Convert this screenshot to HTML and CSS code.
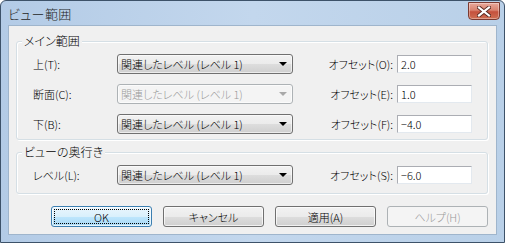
FILE: index.html
```html
<!DOCTYPE html>
<html lang="ja">
<head>
<meta charset="utf-8">
<title>ビュー範囲</title>
<link rel="stylesheet" href="styles.css">
</head>
<body>
<div class="window">
  <div class="titlebar">
    <span class="title">ビュー範囲</span>
    <button class="close" aria-label="閉じる">
      <svg width="14" height="11" viewBox="0 0 14 11">
        <path d="M2 1.5 L12 9.5 M12 1.5 L2 9.5" stroke="#5a2a22" stroke-width="4" stroke-linecap="square"/>
        <path d="M2 1.5 L12 9.5 M12 1.5 L2 9.5" stroke="#ffffff" stroke-width="2.2" stroke-linecap="square"/>
      </svg>
    </button>
  </div>
  <div class="client">
    <div class="group main">
      <span class="group-title">メイン範囲</span>
      <div class="rows">
        <span class="label">上(T):</span>
        <div class="combo"><span class="combo-text">関連したレベル (レベル 1)</span><span class="arrow"></span></div>
        <span class="olabel">オフセット(O):</span>
        <div class="input">2.0</div>

        <span class="label">断面(C):</span>
        <div class="combo disabled"><span class="combo-text">関連したレベル (レベル 1)</span><span class="arrow"></span></div>
        <span class="olabel">オフセット(E):</span>
        <div class="input">1.0</div>

        <span class="label">下(B):</span>
        <div class="combo"><span class="combo-text">関連したレベル (レベル 1)</span><span class="arrow"></span></div>
        <span class="olabel">オフセット(F):</span>
        <div class="input">−4.0</div>
      </div>
    </div>
    <div class="group depth">
      <span class="group-title">ビューの奥行き</span>
      <div class="rows">
        <span class="label">レベル(L):</span>
        <div class="combo"><span class="combo-text">関連したレベル (レベル 1)</span><span class="arrow"></span></div>
        <span class="olabel">オフセット(S):</span>
        <div class="input">−6.0</div>
      </div>
    </div>
    <div class="buttons">
      <button class="btn default"><span class="focus">OK</span></button>
      <button class="btn">キャンセル</button>
      <button class="btn">適用(A)</button>
      <button class="btn disabled">ヘルプ(H)</button>
    </div>
  </div>
</div>
</body>
</html>
```

FILE: styles.css
```css
* { box-sizing: border-box; }
html, body { margin: 0; padding: 0; background: #ffffff; }
body {
  font-family: "Noto Sans CJK JP", "Noto Sans", sans-serif;
  font-size: 11px;
  font-weight: 300;
  font-feature-settings: "palt";
  color: #000;
}
.window {
  width: 505px;
  height: 243px;
  border: 1px solid #3d5269;
  border-radius: 6px 6px 0 0;
  background: linear-gradient(90deg, #b3cbe6 0%, #c3d7ed 50%, #b9d0e8 100%);
  display: flex;
  flex-direction: column;
  padding: 0 7px 7px 7px;
  overflow: hidden;
}
.titlebar {
  height: 24px;
  display: flex;
  align-items: flex-start;
  margin: 0 -3px 0 0;
}
.title {
  font-size: 13px;
  font-weight: 300;
  line-height: 16px;
  margin-top: 5px;
  color: #1e1e1e;
  letter-spacing: 0.4px;
}
.close {
  margin-left: auto;
  width: 32px;
  height: 18px;
  margin-top: 1px;
  padding: 0;
  border: 1px solid #7b3a31;
  border-radius: 0 0 4px 4px;
  background: linear-gradient(#e9a99b 0%, #d9826f 45%, #c5513d 55%, #cf6e52 100%);
  display: flex;
  align-items: center;
  justify-content: center;
  box-shadow: inset 0 0 0 1px rgba(255,255,255,0.35);
}
.client {
  flex: 1;
  background: #f0f0f0;
  border: 1px solid #9fb5cc;
  display: flex;
  flex-direction: column;
  padding: 0 8px 0 7px;
}
.group {
  border: 1px solid #d5dfe5;
  border-radius: 3px;
  display: flex;
  flex-direction: column;
  padding: 0 15px 0 16px;
  box-shadow: inset 1px 1px 0 #ffffff, 1px 1px 0 #ffffff;
}
.group.main { margin-top: 15px; padding-bottom: 5px; }
.group.depth { margin-top: 12px; padding-bottom: 8px; }
.group-title {
  align-self: flex-start;
  margin: -8px 0 0 -11px;
  padding: 0 2px;
  font-size: 12px;
  line-height: 14px;
  background: #f0f0f0;
}
.rows {
  margin-top: 6px;
  display: grid;
  grid-template-columns: 84px 176px 1fr 75px;
  grid-auto-rows: 20px;
  row-gap: 10px;
  align-items: center;
}
.label { line-height: 14px; }
.olabel { justify-self: end; padding-right: 4px; line-height: 14px; }
.combo {
  height: 20px;
  border: 1px solid #707070;
  border-radius: 3px;
  background: linear-gradient(#f2f2f2 0%, #ebebeb 50%, #dddddd 51%, #cfcfcf 100%);
  display: flex;
  align-items: center;
  padding: 0 0 0 3px;
  box-shadow: inset 0 0 0 1px rgba(255,255,255,0.6);
}
.combo-text { flex: 1; line-height: 14px; white-space: nowrap; }
.arrow {
  width: 0; height: 0;
  border-left: 4px solid transparent;
  border-right: 4px solid transparent;
  border-top: 4px solid #000;
  margin-right: 5px;
}
.combo.disabled {
  border-color: #adb2b5;
  background: #f4f4f4;
  color: #9a9a9a;
}
.combo.disabled .arrow { border-top-color: #a9a9a9; }
.input {
  height: 18px;
  background: #fff;
  border: 1px solid #abadb3;
  border-right-color: #e3e9ef;
  border-bottom-color: #e3e9ef;
  padding: 0 3px;
  line-height: 16px;
}
.buttons {
  margin-top: 12px;
  display: flex;
  justify-content: flex-end;
  gap: 11px;
}
.btn {
  width: 101px;
  height: 21px;
  padding: 0;
  font: inherit;
  font-feature-settings: "palt";
  color: #000;
  border: 1px solid #707070;
  border-radius: 3px;
  background: linear-gradient(#f2f2f2 0%, #ebebeb 50%, #dddddd 51%, #cfcfcf 100%);
  box-shadow: inset 0 0 0 1px rgba(255,255,255,0.7);
  line-height: 14px;
  display: flex;
  align-items: center;
  justify-content: center;
}
.btn.default {
  border-color: #3c7fb1;
  background: linear-gradient(#eaf6fd 0%, #d9f0fc 50%, #bee6fd 51%, #a7d9f5 100%);
  padding: 2px;
}
.btn .focus {
  flex: 1;
  align-self: stretch;
  border: 1px dotted #000;
  display: flex;
  align-items: center;
  justify-content: center;
}
.btn.disabled {
  border-color: #adb2b5;
  background: #f4f4f4;
  color: #9a9a9a;
  box-shadow: none;
}
```
